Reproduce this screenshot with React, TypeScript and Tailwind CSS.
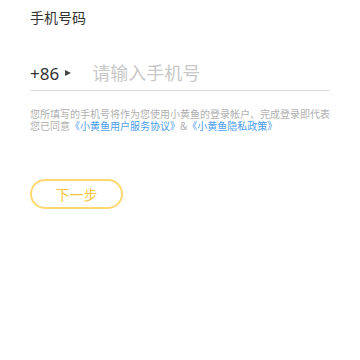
export default function App() {
  return (
    <div
      className="w-[360px] h-[360px] bg-white px-[30px] pt-[8px]"
      style={{ fontFamily: '"Noto Sans", "Noto Sans CJK SC", sans-serif' }}
    >
      <div className="text-[14px] leading-[20px] text-[#333]">手机号码</div>

      <div className="mt-[28px] flex items-center h-[35px] border-b border-[#dadada]">
        <span className="text-[17px] text-[#333] leading-none">+86</span>
        <span className="ml-[6px] w-0 h-0 border-y-[3.5px] border-y-transparent border-l-[6px] border-l-[#444]" />
        <input
          placeholder="请输入手机号"
          className="ml-[21px] flex-1 outline-none bg-transparent text-[18px] text-[#333] placeholder:text-[#c8c8c8]"
        />
      </div>

      <p className="mt-[17px] text-[10px] leading-[12px] text-[#b0b0b0] whitespace-nowrap">
        您所填写的手机号将作为您使用小黄鱼的登录帐户、完成登录即代表
        <br />
        您已同意<span className="text-[#4a9cf0]">《小黄鱼用户服务协议》</span>&amp;
        <span className="text-[#4a9cf0]">《小黄鱼隐私政策》</span>
      </p>

      <button className="mt-[47px] w-[93px] h-[30px] rounded-full border-2 border-[#ffd870] text-[#f8c53e] text-[14px] flex items-center justify-center">
        下一步
      </button>
    </div>
  );
}
